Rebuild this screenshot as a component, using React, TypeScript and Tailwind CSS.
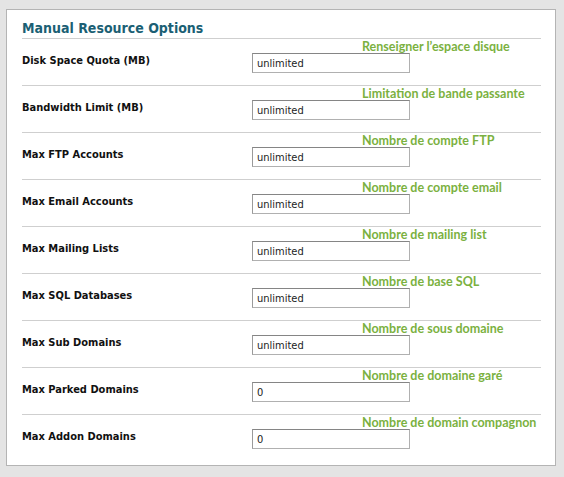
import React from "react";

type Row = {
  label: string;
  value: string;
  note: string;
};

const rows: Row[] = [
  { label: "Disk Space Quota (MB)", value: "unlimited", note: "Renseigner l\u2019espace disque" },
  { label: "Bandwidth Limit (MB)", value: "unlimited", note: "Limitation de bande passante" },
  { label: "Max FTP Accounts", value: "unlimited", note: "Nombre de compte FTP" },
  { label: "Max Email Accounts", value: "unlimited", note: "Nombre de compte email" },
  { label: "Max Mailing Lists", value: "unlimited", note: "Nombre de mailing list" },
  { label: "Max SQL Databases", value: "unlimited", note: "Nombre de base SQL" },
  { label: "Max Sub Domains", value: "unlimited", note: "Nombre de sous domaine" },
  { label: "Max Parked Domains", value: "0", note: "Nombre de domaine gar\u00e9" },
  { label: "Max Addon Domains", value: "0", note: "Nombre de domain compagnon" },
];

const App = () => {
  return (
    <div className="w-[564px] h-[477px] bg-[#e4e4e4] pt-[9px] pl-[6px] font-['DejaVu_Sans_Condensed','DejaVu_Sans',sans-serif]">
      <div className="w-[550px] h-[457px] bg-white border border-[#b4b4b4] pl-[15px] pr-[14px]">
        <h2 className="pt-[9px] h-[28px] text-[14px] leading-[18px] font-bold text-[#1b5f74]">
          Manual Resource Options
        </h2>

        {rows.map((row) => (
          <div key={row.label} className="relative h-[47px] border-t border-[#cfcfcf] flex items-start pt-[14px]">
            <div className="w-[230px] text-[11px] leading-[15px] font-bold text-[#111]">{row.label}</div>
            <input
              readOnly
              value={row.value}
              className="w-[158px] h-[20px] border border-[#b0b0b0] border-t-[#858585] border-l-[#9a9a9a] px-[4px] text-[11px] text-[#222] bg-white outline-none font-['DejaVu_Sans_Condensed','DejaVu_Sans',sans-serif]"
            />
            {/* hand-written annotation over the row */}
            <span className="absolute left-[340px] top-[1px] whitespace-nowrap text-[12.5px] leading-[14px] font-bold text-[#7bb13f] font-['Lato','Comic_Sans_MS',sans-serif]">
              {row.note}
            </span>
          </div>
        ))}
      </div>
    </div>
  );
};

export default App;
